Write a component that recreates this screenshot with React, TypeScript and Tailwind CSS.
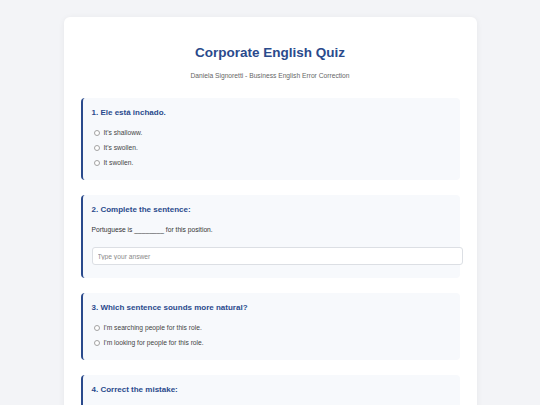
import React from 'react';

type Question =
  | { kind: 'choice'; title: string; options: string[] }
  | { kind: 'text'; title: string; prompt?: string };

const questions: Question[] = [
  { kind: 'choice', title: '1. Ele está inchado.', options: ["It's shalloww.", "It's swollen.", 'It swollen.'] },
  { kind: 'text', title: '2. Complete the sentence:', prompt: 'Portuguese is ________ for this position.' },
  {
    kind: 'choice',
    title: '3. Which sentence sounds more natural?',
    options: ["I'm searching people for this role.", "I'm looking for people for this role."],
  },
  { kind: 'text', title: '4. Correct the mistake:' },
];

function QuestionBox({ q }: { q: Question }) {
  return (
    <div className="rounded-[4px] border-l-2 border-[#2a4a8c] bg-[#f7f9fc] pl-[9px] pr-[9px] pt-[10px] pb-[13px]">
      <h3 className="text-[8px] leading-[9px] font-bold text-[#2a4a8c]">{q.title}</h3>

      {q.kind === 'choice' ? (
        <div className="mt-[12px] flex flex-col gap-[7px]">
          {q.options.map((opt) => (
            <label key={opt} className="flex h-[8px] items-center text-[6.7px] text-[#444]">
              <span className="ml-[2px] mr-[4px] h-[6px] w-[6px] rounded-full border border-[#a3a3a3] bg-white" />
              {opt}
            </label>
          ))}
        </div>
      ) : (
        <div>
          {q.prompt && <p className="mt-[12px] text-[6.7px] leading-[8px] text-[#333]">{q.prompt}</p>}
          <input
            type="text"
            placeholder="Type your answer"
            className="mt-[13px] box-content block h-[16px] w-full rounded-[3px] border border-[#dcdfe4] bg-white px-[5px] text-[6.7px] text-[#333] outline-none placeholder:text-[#8a8a8a]"
          />
        </div>
      )}
    </div>
  );
}

export default function App() {
  return (
    <div className="min-h-screen bg-[#f3f4f7] pt-[17px] font-['Liberation_Sans',Arial,sans-serif]">
      <div className="mx-auto w-[413px] rounded-[6px] bg-white px-[17px] pt-[28px] pb-[20px] shadow-[0_1px_6px_rgba(0,0,0,0.06)]">
        {/* Header */}
        <h1 className="text-center text-[13.5px] leading-[16px] font-bold text-[#2a4a8c]">Corporate English Quiz</h1>
        <p className="mt-[11px] text-center text-[6.7px] leading-[8px] text-[#666]">
          Daniela Signoretti - Business English Error Correction
        </p>

        {/* Questions */}
        <div className="mt-[18px] flex flex-col gap-[15px]">
          {questions.map((q) => (
            <QuestionBox key={q.title} q={q} />
          ))}
        </div>
      </div>
    </div>
  );
}
